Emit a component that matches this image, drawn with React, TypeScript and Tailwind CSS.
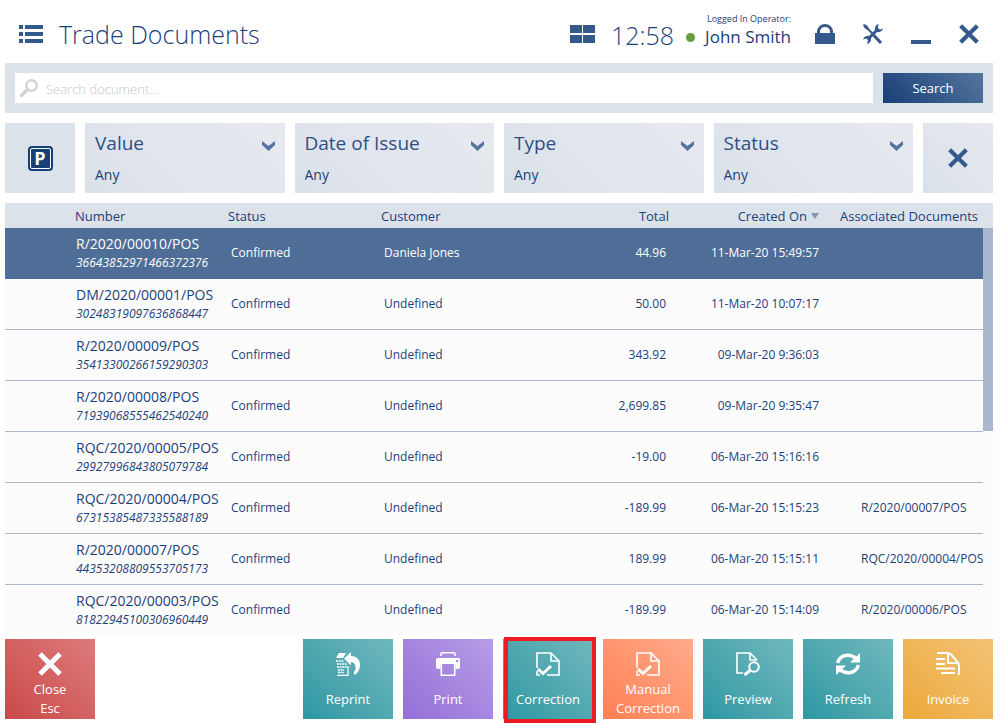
import { ReactNode, useState } from "react";
import clsx from "clsx";

type Doc = {
  number: string;
  code: string;
  customer: string;
  total: string;
  created: string;
  associated?: string;
};

const docs: Doc[] = [
  { number: "R/2020/00010/POS", code: "36643852971466372376", customer: "Daniela Jones", total: "44.96", created: "11-Mar-20 15:49:57" },
  { number: "DM/2020/00001/POS", code: "30248319097636868447", customer: "Undefined", total: "50.00", created: "11-Mar-20 10:07:17" },
  { number: "R/2020/00009/POS", code: "35413300266159290303", customer: "Undefined", total: "343.92", created: "09-Mar-20 9:36:03" },
  { number: "R/2020/00008/POS", code: "71939068555462540240", customer: "Undefined", total: "2,699.85", created: "09-Mar-20 9:35:47" },
  { number: "RQC/2020/00005/POS", code: "29927996843805079784", customer: "Undefined", total: "-19.00", created: "06-Mar-20 15:16:16" },
  { number: "RQC/2020/00004/POS", code: "67315385487335588189", customer: "Undefined", total: "-189.99", created: "06-Mar-20 15:15:23", associated: "R/2020/00007/POS" },
  { number: "R/2020/00007/POS", code: "44353208809553705173", customer: "Undefined", total: "189.99", created: "06-Mar-20 15:15:11", associated: "RQC/2020/00004/POS" },
  { number: "RQC/2020/00003/POS", code: "81822945100306960449", customer: "Undefined", total: "-189.99", created: "06-Mar-20 15:14:09", associated: "R/2020/00006/POS" },
];

const filters = ["Value", "Date of Issue", "Type", "Status"];

function CrossIcon({ className }: { className: string }) {
  return (
    <svg viewBox="0 0 24 24" className={className} fill="none" stroke="currentColor" strokeWidth="5" aria-hidden="true">
      <path d="M2 2l20 20M22 2L2 22" />
    </svg>
  );
}

function ActionIcon({ children }: { children: ReactNode }) {
  return (
    <svg viewBox="0 0 24 24" className="h-6 w-6 shrink-0" fill="none" stroke="currentColor" strokeWidth="1.6" aria-hidden="true">
      {children}
    </svg>
  );
}

const correctionIcon = (
  <ActionIcon>
    <path d="M1 16V1h14l8 8v14H11M15 1v8h8M1 19v4h3" />
    <path d="M2 17l5 4.500 8-7.500" strokeWidth="3" />
  </ActionIcon>
);

const reprintIcon = (
  <ActionIcon>
    <path d="M3 1h7L7 6H0z" fill="currentColor" stroke="none" />
    <path d="M0 9h8M1 12h10M1 15h10M2 18h6M2 20.500h6" strokeWidth="1.600" strokeDasharray="2 .6" />
    <path d="M1 23.300h11V14" strokeWidth="1.200" />
    <path d="M8 6.500L15 0v4c6 0 9 4 9 9 0 5-3 9-6 10v-3c2-2 2-5 1-7-.600-2-2-3-4-3v3.500z" fill="currentColor" stroke="none" />
  </ActionIcon>
);

const printIcon = (
  <ActionIcon>
    <path d="M5 4V2q0-1.200 1.200-1.200h11.600Q19 .8 19 2v2" />
    <path d="M2 6h20q2 0 2 2v7q0 2-2 2h-2.500v-5h-15v5H2q-2 0-2-2V8q0-2 2-2z" fill="currentColor" stroke="none" />
    <path d="M5.300 12v11.200h13.400V12" />
    <circle cx="21" cy="9" r="1.200" fill="#a586e0" stroke="none" />
  </ActionIcon>
);

const previewIcon = (
  <ActionIcon>
    <path d="M7 21H1V1h13l7 7M14 1v7h7" />
    <circle cx="18" cy="15" r="4.800" strokeWidth="2" />
    <path d="M14 18.500l-5.500 4.500" strokeWidth="3" />
  </ActionIcon>
);

const refreshIcon = (
  <ActionIcon>
    <path d="M1.500 11C4 2.500 14 1 20 6.500" strokeWidth="3.400" />
    <path d="M24 1v9.500H14z" fill="currentColor" stroke="none" />
    <path d="M22.500 13C20 21.500 10 23 4 17.500" strokeWidth="3.400" />
    <path d="M0 23v-9.500h10z" fill="currentColor" stroke="none" />
  </ActionIcon>
);

const invoiceIcon = (
  <ActionIcon>
    <path d="M1 1h10q3 0 5.500 3l5 6q1.500 1.500 1.500 4v9" strokeWidth="2" />
    <path d="M12 1v10h10" strokeWidth="2" />
    <path d="M0 7h9M0 12h9M0 16.500h19M5 21h14" strokeWidth="2" />
  </ActionIcon>
);

const actions = [
  { label: "Reprint", icon: reprintIcon, color: "from-[#2a98a3] to-[#6fb8bd]" },
  { label: "Print", icon: printIcon, color: "from-[#946fd8] to-[#b79de6]" },
  { label: "Correction", icon: correctionIcon, color: "from-[#2a98a3] to-[#6fb8bd]", marked: true },
  { label: "Manual Correction", icon: correctionIcon, color: "from-[#ff8052] to-[#ffab8c]" },
  { label: "Preview", icon: previewIcon, color: "from-[#2a98a3] to-[#6fb8bd]" },
  { label: "Refresh", icon: refreshIcon, color: "from-[#2a98a3] to-[#6fb8bd]" },
  { label: "Invoice", icon: invoiceIcon, color: "from-[#eda938] to-[#f2c274]" },
];

function ActionButton({ label, icon, color, marked }: { label: ReactNode; icon: ReactNode; color: string; marked?: boolean }) {
  return (
    <button
      className={clsx(
        "relative flex h-20 w-[90px] flex-col items-center bg-linear-45 pt-[13px] text-[13px] leading-[19px] text-white",
        color
      )}
    >
      {icon}
      <span className="mt-[3px] flex flex-1 items-center">{label}</span>
      {marked && <span className="absolute -top-0.5 -right-[3px] -bottom-1 left-px border-4 border-[#ed1c24]" />}
    </button>
  );
}

function TopBar() {
  return (
    <header className="flex h-[63px] shrink-0 items-center pt-1 pr-3.5 pl-3.5 text-[#34598c]">
      <button aria-label="Menu">
        <svg viewBox="0 0 24 18" className="h-[18px] w-6" fill="currentColor">
          <path d="M0 0h4v4H0zM6 0h18v4H6zM0 7h4v4H0zM6 7h18v4H6zM0 14h4v4H0zM6 14h18v4H6z" />
        </svg>
      </button>
      <h1 className="ml-4 flex-1 pt-0.5 text-[25px] font-light text-[#1c4079]">Trade Documents</h1>
      <button aria-label="Windows">
        <svg viewBox="0 0 25 18" className="h-[18px] w-[25px]" fill="currentColor">
          <path d="M0 0h12v8H0zM13 0h12v8H13zM0 10h12v8H0zM13 10h12v8H13z" />
        </svg>
      </button>
      <time className="ml-4 pt-1 text-[25px] font-light text-[#1c4079]">12:58</time>
      <span className="mt-2 ml-3 h-[9px] w-[9px] rounded-full bg-[#6a9a41]" />
      <div className="mb-1.5 ml-2.5 text-right text-[#1c4079]">
        <p className="text-[9px] leading-3">Logged In Operator:</p>
        <p className="text-[17px] leading-6">John Smith</p>
      </div>
      <button aria-label="Lock" className="ml-6">
        <svg viewBox="0 0 20 20" className="h-5 w-5">
          <path d="M3.500 10V7.500a6.500 6 0 0113 0V10" fill="none" stroke="currentColor" strokeWidth="3" />
          <path d="M0 9h20v11H0z" fill="currentColor" />
        </svg>
      </button>
      <button aria-label="Settings" className="ml-7">
        <svg viewBox="0 0 20 20" className="h-5 w-5" fill="none" stroke="currentColor">
          <path d="M1.500 1.500L10 10" strokeWidth="2" />
          <path d="M0 1l1-1 3 1.500 2 3L4.500 6l-3-2z" fill="currentColor" stroke="none" />
          <path d="M10.500 11l7.500 8" strokeWidth="3" />
          <path d="M5 15l10-10" strokeWidth="3" />
          <path d="M15.500 0a5 5 0 00-3.500 6l2 2a5 5 0 006-3.500l-3 1-2-1.500zM6 12a5 5 0 00-6 3.500l3-1 2 1.500-1 4a5 5 0 004-6z" fill="currentColor" stroke="none" />
        </svg>
      </button>
      <button aria-label="Minimize" className="ml-7 flex h-5 w-5 items-end">
        <span className="h-1 w-5 bg-current" />
      </button>
      <button aria-label="Exit" className="ml-7">
        <CrossIcon className="h-5 w-5" />
      </button>
    </header>
  );
}

function Filter({ name }: { name: string }) {
  return (
    <div className="relative flex flex-1 flex-col bg-linear-45 from-[#dae1e9] via-[#e2e6ee] to-[#e7e9ef] px-2.5 text-[#1c4079]">
      <label htmlFor={name} className="mt-1.5 text-[19px] leading-7 text-[#2c5084]">
        {name}
      </label>
      <select id={name} className="mt-2 w-full appearance-none bg-transparent text-sm leading-5 outline-none">
        <option>Any</option>
      </select>
      <svg viewBox="0 0 13 10" className="pointer-events-none absolute top-[18px] right-2.5 h-2.5 w-[13px]" fill="#54749f">
        <path d="M0 0l6.500 5L13 0v4l-6.500 6L0 4z" />
      </svg>
    </div>
  );
}

export default function App() {
  const [selected, setSelected] = useState(0);

  return (
    <div className="flex h-screen flex-col bg-white pr-2 pb-[7px] pl-[5px] font-['Open_Sans','Noto_Sans',sans-serif] text-[#1c4079]">
      <TopBar />

      <form className="flex shrink-0 gap-2.5 bg-[#dbe2ea] p-2.5" onSubmit={(e) => e.preventDefault()}>
        <div className="flex h-[30px] flex-1 items-center bg-white pl-[5px]">
          <svg viewBox="0 0 18 18" className="h-[18px] w-[18px]" fill="none" stroke="#d3d3d3">
            <circle cx="11.500" cy="6.500" r="5.200" strokeWidth="2.400" />
            <path d="M7.500 10.500l-6 6" strokeWidth="3.400" strokeLinecap="round" />
          </svg>
          <input
            aria-label="Search document"
            className="h-full flex-1 pt-0.5 pl-2 text-[13px] font-light outline-none placeholder:text-[#c6c6c6]"
            placeholder="Search document..."
          />
        </div>
        <button className="w-[100px] bg-linear-45 from-[#173f78] to-[#56769d] pt-0.5 text-[13px] text-white">Search</button>
      </form>

      <div className="mt-2.5 flex h-[70px] shrink-0 gap-2.5">
        <button aria-label="Parked documents" className="flex w-[70px] items-center justify-center bg-[#dbe2ea]">
          <span className="flex h-[25px] w-[25px] rounded-sm bg-[#173f78] p-0.5">
            <span className="flex flex-1 items-center justify-center rounded-xs border border-white text-lg leading-5 font-bold text-white">
              P
            </span>
          </span>
        </button>
        {filters.map((name) => (
          <Filter key={name} name={name} />
        ))}
        <button
          aria-label="Clear filters"
          className="flex w-[70px] items-center justify-center bg-linear-45 from-[#dae1e9] to-[#e7e9ef] text-[#34598c]"
        >
          <CrossIcon className="h-5 w-5" />
        </button>
      </div>

      <div className="mt-2.5 flex min-h-0 flex-1 overflow-hidden bg-[#fcfcfc]">
        <div className="flex-1">
          <table className="w-full table-fixed border-separate border-spacing-0 text-left text-xs">
            <colgroup>
              <col className="w-[70px]" />
              <col className="w-[153px]" />
              <col className="w-[153px]" />
              <col />
              <col className="w-[120px]" />
              <col className="w-[150px]" />
              <col className="w-[161px]" />
            </colgroup>
            <thead>
              <tr className="h-[25px] bg-[#dbe2ea] text-[13px] whitespace-nowrap *:pt-0.5">
                <th></th>
                <th className="font-normal">Number</th>
                <th className="font-normal">Status</th>
                <th className="font-normal">Customer</th>
                <th className="pr-[3px] text-right font-normal">Total</th>
                <th className="font-normal">
                  <span className="flex items-center justify-end gap-1 pr-[3px]">
                    Created On
                    <svg viewBox="0 0 8 6" className="h-1.5 w-2" fill="#7f97b5">
                      <path d="M0 0h8L4 6z" />
                    </svg>
                  </span>
                </th>
                <th className="pl-[18px] font-normal">Associated Documents</th>
              </tr>
            </thead>
            <tbody>
              {docs.map((doc, i) => (
                <tr
                  key={doc.code}
                  onClick={() => setSelected(i)}
                  className={clsx("h-[51px] *:border-b", i === selected ? "bg-[#4e6e97] text-white *:border-[#4e6e97]" : "*:border-[#a9b8cd]")}
                >
                  <td></td>
                  <td className="pl-px">
                    <p className="text-sm leading-5">{doc.number}</p>
                    <p className="text-xs leading-[18px] italic">{doc.code}</p>
                  </td>
                  <td className="pl-[3px]">Confirmed</td>
                  <td className="pl-[3px]">{doc.customer}</td>
                  <td className="pr-1.5 text-right">{doc.total}</td>
                  <td className="pr-[3px] text-right">{doc.created}</td>
                  <td className="pl-[39px] whitespace-nowrap">{doc.associated}</td>
                </tr>
              ))}
            </tbody>
          </table>
        </div>
        <div className="flex w-2.5 flex-col">
          <div className="h-[25px] bg-[#dbe2ea]" />
          <div className="h-[47%] bg-[#a9b8cd]" />
        </div>
      </div>

      <footer className="mt-[5px] flex shrink-0 gap-2.5">
        <ActionButton
          label={
            <>
              Close
              <br />
              Esc
            </>
          }
          icon={<CrossIcon className="h-6 w-6 shrink-0" />}
          color="from-[#c94848] to-[#dc7b7b]"
        />
        <div className="flex flex-1 justify-end gap-2.5">
          {actions.map((action) => (
            <ActionButton key={action.label} {...action} />
          ))}
        </div>
      </footer>
    </div>
  );
}
